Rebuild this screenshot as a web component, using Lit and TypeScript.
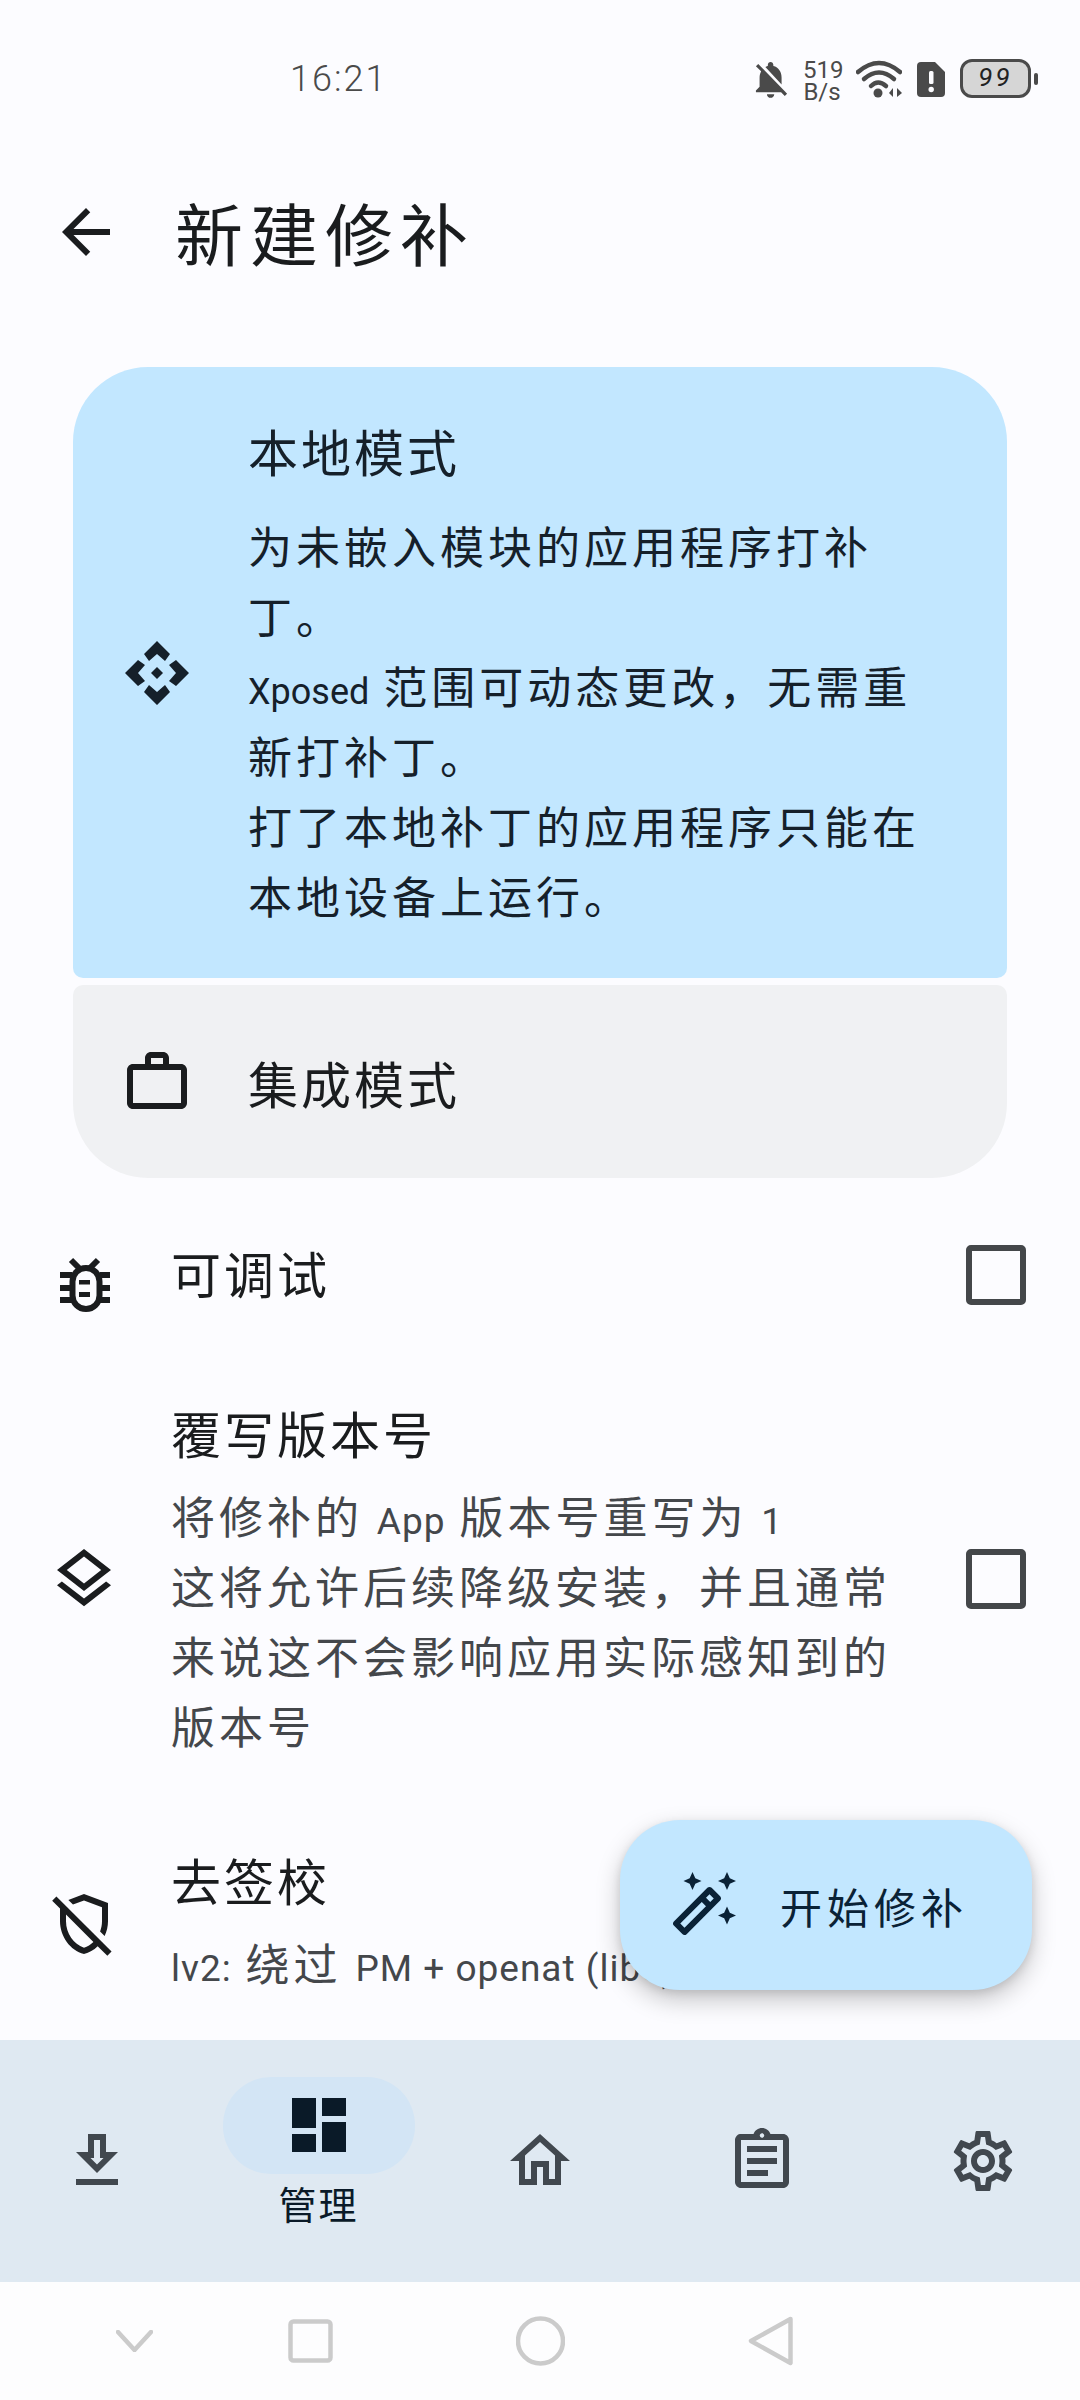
import { LitElement, html, css, svg } from "lit";
import { customElement } from "lit/decorators.js";

const M = (d: string) => html`<svg class="ic" viewBox="0 0 24 24"><path d=${d}></path></svg>`;

const ICONS = {
  back: "M20 11H7.83l5.59-5.59L12 4l-8 8 8 8 1.41-1.41L7.83 13H20v-2z",
  work: "M20 6h-4V4c0-1.11-.89-2-2-2h-4c-1.11 0-2 .89-2 2v2H4c-1.11 0-1.99.89-1.99 2L2 19c0 1.11.89 2 2 2h16c1.11 0 2-.89 2-2V8c0-1.11-.89-2-2-2zm-6 0h-4V4h4v2zm6 13H4V8h16v11z",
  layers: "M12 18.54l-7.38-5.74L3 14.07l9 7 9-7-1.63-1.27-7.37 5.74zM12 16l7.36-5.73L21 9l-9-7-9 7 1.63 1.27L12 16zm0-11.47L17.74 9 12 13.47 6.26 9 12 4.53z",
  shieldOff: "M12 4.14l6 2.25v4.7c0 1.19-.23 2.36-.64 3.44l1.51 1.51c.72-1.53 1.13-3.22 1.13-4.95V5l-8-3-5.22 1.96 1.55 1.55L12 4.14zM2.81 2.81 1.39 4.22 4 6.83v4.26c0 5.05 3.41 9.76 8 10.91 1.72-.43 3.28-1.36 4.55-2.62l3.23 3.23 1.41-1.41L2.81 2.81zM12 19.92c-3.45-1.13-6-4.82-6-8.83V8.83l9.14 9.14c-.9.87-1.97 1.55-3.14 1.95z",
  wand: "M20 7l.94-2.06L23 4l-2.06-.94L20 1l-.94 2.06L17 4l2.06.94zM8.5 7l.94-2.06L11.5 4l-2.06-.94L8.5 1l-.94 2.06L5.5 4l2.06.94zM20 12.5l-.94 2.06-2.06.94 2.06.94.94 2.06.94-2.06L23 15.5l-2.06-.94zM17.71 9.12l-2.83-2.83c-.2-.19-.45-.29-.71-.29-.26 0-.51.1-.71.29L2.29 17.46c-.39.39-.39 1.02 0 1.41l2.83 2.83c.2.2.45.3.71.3s.51-.1.71-.29l11.17-11.17c.39-.39.39-1.03 0-1.42zm-3.54-.7l1.42 1.42L14.41 11 13 9.59l1.17-1.17zM5.83 19.59l-1.41-1.41L11.59 11 13 12.41l-7.17 7.18z",
  download: "M19 9h-4V3H9v6H5l7 7 7-7zm-8 2V5h2v6h1.17L12 13.17 9.83 11H11zm-6 7h14v2H5z",
  dashboard: "M3 13h8V3H3v10zm0 8h8v-6H3v6zm10 0h8V11h-8v10zm0-18v6h8V3h-8z",
  home: "M12 5.69l5 4.5V18h-2v-6H9v6H7v-7.81l5-4.5M12 3L2 12h3v8h6v-6h2v6h6v-8h3L12 3z",
  assignment: "M7 15h7v2H7zm0-4h10v2H7zm0-4h10v2H7zm12-4h-4.18C14.4 1.84 13.3 1 12 1s-2.4.84-2.82 2H5c-.14 0-.27.01-.4.04-.39.08-.74.28-1.01.55-.18.18-.33.4-.43.64-.1.23-.16.49-.16.77v14c0 .27.06.54.16.78s.25.45.43.64c.27.27.62.47 1.01.55.13.02.26.03.4.03h14c1.1 0 2-.9 2-2V5c0-1.1-.9-2-2-2zm-7-.25c.41 0 .75.34.75.75s-.34.75-.75.75-.75-.34-.75-.75.34-.75.75-.75zM19 19H5V5h14v14z",
  settings: "M19.43 12.98c.04-.32.07-.64.07-.98 0-.34-.03-.66-.07-.98l2.11-1.65c.19-.15.24-.42.12-.64l-2-3.46c-.09-.16-.26-.25-.44-.25-.06 0-.12.01-.17.03l-2.49 1c-.52-.4-1.08-.73-1.69-.98l-.38-2.65C14.46 2.18 14.25 2 14 2h-4c-.25 0-.46.18-.49.42l-.38 2.65c-.61.25-1.17.59-1.69.98l-2.49-1c-.06-.02-.12-.03-.18-.03-.17 0-.34.09-.43.25l-2 3.46c-.13.22-.07.49.12.64l2.11 1.65c-.04.32-.07.65-.07.98 0 .33.03.66.07.98l-2.11 1.65c-.19.15-.24.42-.12.64l2 3.46c.09.16.26.25.44.25.06 0 .12-.01.17-.03l2.49-1c.52.4 1.08.73 1.69.98l.38 2.65c.03.24.24.42.49.42h4c.25 0 .46-.18.49-.42l.38-2.65c.61-.25 1.17-.59 1.69-.98l2.49 1c.06.02.12.03.18.03.17 0 .34-.09.43-.25l2-3.46c.12-.22.07-.49-.12-.64l-2.11-1.65zm-1.98-1.71c.04.31.05.52.05.73 0 .21-.02.43-.05.73l-.14 1.13.89.7 1.08.84-.7 1.21-1.27-.51-1.04-.42-.9.68c-.43.32-.84.56-1.25.73l-1.06.43-.16 1.13-.2 1.35h-1.4l-.19-1.35-.16-1.13-1.06-.43c-.43-.18-.83-.41-1.23-.71l-.91-.7-1.06.43-1.27.51-.7-1.21 1.08-.84.89-.7-.14-1.13c-.03-.31-.05-.54-.05-.74s.02-.43.05-.73l.14-1.13-.89-.7-1.08-.84.7-1.21 1.27.51 1.04.42.9-.68c.43-.32.84-.56 1.25-.73l1.06-.43.16-1.13.2-1.35h1.39l.19 1.35.16 1.13 1.06.43c.43.18.83.41 1.23.71l.91.7 1.06-.43 1.27-.51.7 1.21-1.07.85-.89.7.14 1.13zM12 8c-2.21 0-4 1.79-4 4s1.79 4 4 4 4-1.79 4-4-1.79-4-4-4zm0 6c-1.1 0-2-.9-2-2s.9-2 2-2 2 .9 2 2-.9 2-2 2z",
  bellOff: "M20 18.69L7.84 6.14 5.27 3.49 4 4.76l2.8 2.8v.01c-.52.99-.8 2.16-.8 3.42v5l-2 2v1h13.73l2 2L21 19.72l-1-1.03zM12 22c1.11 0 2-.89 2-2h-4c0 1.11.89 2 2 2zm6-7.32V11c0-3.08-1.64-5.64-4.5-6.32V4c0-.83-.67-1.5-1.5-1.5s-1.5.67-1.5 1.5v.68c-.15.03-.29.08-.42.12-.1.03-.2.07-.3.11h-.01c-.2.08-.4.17-.59.27-.01 0-.01 0-.02.01L18 14.68z",
};

const localIcon = html`<svg class="ic" viewBox="0 0 72 72">
  ${[0, 90, 180, 270].map(
    (r) => svg`<polygon transform="rotate(${r} 36 36)" points="36,4 49,17 44,24 36,17 28,24 23,17"></polygon>`
  )}
  <polygon points="36,30 42,36 36,42 30,36"></polygon>
</svg>`;

const bugIcon = html`<svg class="ic bug" viewBox="0 0 72 72">
  <rect class="s" x="24.5" y="29" width="27" height="41" rx="13.5"></rect>
  <path class="s" d="M12 36H24M12 49H24M12 61H24M52 36H62M52 49H62M52 61H62M23 21L31 29M50 21L42 29"></path>
  <rect x="31" y="41" width="11" height="4.5"></rect>
  <rect x="31" y="53" width="11" height="5"></rect>
</svg>`;

@customElement("app-root")
export class AppRoot extends LitElement {
  static styles = css`
    :host {
      display: flex;
      flex-direction: column;
      position: relative;
      width: 1080px;
      height: 2400px;
      overflow: hidden;
      background: #fcfcff;
      color: #1a1c1e;
      font-family: "Noto Sans CJK SC", "Noto Sans", sans-serif;
    }
    .ic { width: 72px; height: 72px; flex: none; fill: currentColor; overflow: visible; display: block; }
    .bug .s { fill: none; stroke: currentColor; stroke-width: 6; }
    .lat { font-family: Roboto, sans-serif; font-size: 37px; letter-spacing: 1px; line-height: 1; }
    .lat.tight { font-size: 36px; letter-spacing: 0; }

    .status { height: 132px; flex: none; display: flex; align-items: flex-start; padding: 59px 42px 0 290px; box-sizing: border-box; color: #4a4a4a; }
    .time { font-family: Roboto, sans-serif; font-weight: 300; font-size: 36px; letter-spacing: 2px; line-height: 40px; flex: 1; }
    .tray { display: flex; gap: 15px; align-items: flex-start; }
    .tray svg { display: block; fill: currentColor; flex: none; }
    .bell { width: 33px; height: 37px; margin-top: 2px; }
    .speed { font-family: Roboto, sans-serif; font-size: 24px; line-height: 22px; width: 38px; text-align: center; }
    .wifi { width: 46px; height: 38px; margin-top: 1px; }
    .wifi .a { fill: none; stroke: currentColor; stroke-width: 4.5; stroke-linecap: round; }
    .sim { width: 28px; height: 35px; margin-top: 3px; }
    .batt { display: flex; align-items: center; gap: 3px; }
    .cell { width: 71px; height: 39px; box-sizing: border-box; border: 3.5px solid #4a4a4a; border-radius: 12px; background: #d6d6d6; color: #222; font-family: Roboto, sans-serif; font-style: italic; font-size: 26px; line-height: 31px; letter-spacing: 3px; text-align: center; }
    .nub { width: 4px; height: 12px; border-radius: 2px; background: #4a4a4a; }

    .bar { height: 200px; flex: none; display: flex; align-items: center; gap: 53px; padding-left: 50px; }
    .bar h1 { margin: 0; font-weight: 400; font-size: 68px; letter-spacing: 7px; line-height: 90px; }

    .main { flex: 1; min-height: 0; overflow: hidden; padding-top: 35px; }
    .group { margin: 0 73px; display: flex; flex-direction: column; gap: 7px; }
    .opt { display: flex; align-items: center; gap: 55px; padding-left: 48px; }
    .opt.on { background: #c2e7ff; border-radius: 75px 75px 10px 10px; padding-top: 48px; padding-bottom: 48px; color: #15202a; }
    .opt.off { background: #f0f1f3; border-radius: 10px 10px 75px 75px; height: 193px; }
    .opt .txt { width: 684px; }
    .t { font-size: 50px; letter-spacing: 3px; line-height: 70px; }
    .d { font-size: 44px; letter-spacing: 4px; line-height: 70px; }
    .opt .d { margin-top: 25px; }

    .list { margin-top: 14px; }
    .row { display: flex; align-items: center; padding: 42px 54px 42px 48px; gap: 51px; box-sizing: border-box; min-height: 166px; }
    .row .txt { flex: 1; min-width: 0; margin: -3px -17px 3px 0; }
    .row.tall { padding-top: 39px; padding-bottom: 45px; }
    .row.tall .txt { margin-top: 0; margin-bottom: 0; }
    .row .d { margin-top: 13px; color: #44474b; }
    .nw { white-space: nowrap; overflow: hidden; }
    .cb { width: 60px; height: 60px; flex: none; box-sizing: border-box; border: 6px solid #44474a; border-radius: 5px; }

    .nav { height: 242px; flex: none; background: #dfe9f2; display: flex; justify-content: space-between; align-items: center; padding: 0 34px; color: #41484f; }
    .item { width: 126px; display: flex; flex-direction: column; align-items: center; }
    .item.act { padding-bottom: 15px; color: #0a1a28; }
    .pill { width: 192px; height: 97px; border-radius: 48px; background: #d3e5f5; display: flex; align-items: center; justify-content: center; flex: none; }
    .lbl { font-size: 38px; letter-spacing: 2px; line-height: 56px; margin-top: 1px; }

    .sys { height: 118px; flex: none; display: grid; grid-template-columns: 268px 84px 376px 84px; align-items: center; justify-items: center; color: #cbcbcb; background: #fdfdfe; }
    .sys svg { display: block; fill: none; stroke: currentColor; stroke-width: 4.5; stroke-linejoin: round; stroke-linecap: round; }

    .fab { position: absolute; right: 48px; top: 1820px; width: 412px; height: 170px; box-sizing: border-box; border-radius: 60px; background: #c2e7ff; color: #0a2236; display: flex; align-items: center; gap: 41px; padding-left: 47px; box-shadow: 0 10px 24px rgba(0, 0, 0, 0.22), 0 3px 8px rgba(0, 0, 0, 0.1); font-size: 42px; letter-spacing: 5px; }
  `;

  render() {
    return html`
      <div class="status">
        <div class="time">16:21</div>
        <div class="tray">
          <svg class="bell" viewBox="3.5 2 18 20"><path d=${ICONS.bellOff}></path></svg>
          <div class="speed">519<br />B/s</div>
          <svg class="wifi" viewBox="0 0 46 38">
            <path class="a" d="M2 12Q23 -6 44 12"></path>
            <path class="a" d="M8 19Q23 6 38 19"></path>
            <path class="a" d="M15 26Q22 19 30 26"></path>
            <circle cx="22" cy="33" r="4.5"></circle>
            <polygon points="33,33 37,28 37,37"></polygon>
            <polygon points="46,33 41,28 41,37"></polygon>
          </svg>
          <svg class="sim" viewBox="0 0 28 35">
            <path d="M4 0H18L28 10V31a4 4 0 0 1-4 4H4a4 4 0 0 1-4-4V4a4 4 0 0 1 4-4z"></path>
            <rect x="12" y="9" width="4.5" height="13" rx="1.5" fill="#fcfcff"></rect>
            <circle cx="14.2" cy="27.5" r="2.7" fill="#fcfcff"></circle>
          </svg>
          <div class="batt"><div class="cell">99</div><div class="nub"></div></div>
        </div>
      </div>

      <div class="bar">
        ${M(ICONS.back)}
        <h1>新建修补</h1>
      </div>

      <div class="main">
        <div class="group">
          <div class="opt on">
            ${localIcon}
            <div class="txt">
              <div class="t">本地模式</div>
              <div class="d">为未嵌入模块的应用程序打补丁。<br /><span class="lat tight">Xposed</span> 范围可动态更改，无需重新打补丁。<br />打了本地补丁的应用程序只能在本地设备上运行。</div>
            </div>
          </div>
          <div class="opt off">
            ${M(ICONS.work)}
            <div class="txt"><div class="t">集成模式</div></div>
          </div>
        </div>

        <div class="list">
          <div class="row">
            ${bugIcon}
            <div class="txt"><div class="t">可调试</div></div>
            <div class="cb"></div>
          </div>
          <div class="row tall">
            ${M(ICONS.layers)}
            <div class="txt">
              <div class="t">覆写版本号</div>
              <div class="d">将修补的 <span class="lat">App</span> 版本号重写为 <span class="lat">1</span><br />这将允许后续降级安装，并且通常来说这不会影响应用实际感知到的版本号</div>
            </div>
            <div class="cb"></div>
          </div>
          <div class="row">
            ${M(ICONS.shieldOff)}
            <div class="txt">
              <div class="t">去签校</div>
              <div class="d nw"><span class="lat">lv2:</span> 绕过 <span class="lat">PM + openat (libc)</span></div>
            </div>
            <div class="cb"></div>
          </div>
        </div>
      </div>

      <div class="nav">
        <div class="item">${M(ICONS.download)}</div>
        <div class="item act">
          <div class="pill">${M(ICONS.dashboard)}</div>
          <div class="lbl">管理</div>
        </div>
        <div class="item">${M(ICONS.home)}</div>
        <div class="item">${M(ICONS.assignment)}</div>
        <div class="item">${M(ICONS.settings)}</div>
      </div>

      <div class="sys">
        <svg width="37" height="22" viewBox="0 0 37 22"><path d="M2 2L18.5 20L35 2"></path></svg>
        <svg width="45" height="44" viewBox="0 0 45 44"><rect x="2.5" y="2.5" width="40" height="39" rx="3"></rect></svg>
        <svg width="49" height="50" viewBox="0 0 49 50"><circle cx="24.5" cy="25" r="22.5"></circle></svg>
        <svg width="45" height="50" viewBox="0 0 45 50"><path d="M42.5 3L3 25L42.5 47Z"></path></svg>
      </div>

      <div class="fab">
        ${M(ICONS.wand)}
        <span>开始修补</span>
      </div>
    `;
  }
}
